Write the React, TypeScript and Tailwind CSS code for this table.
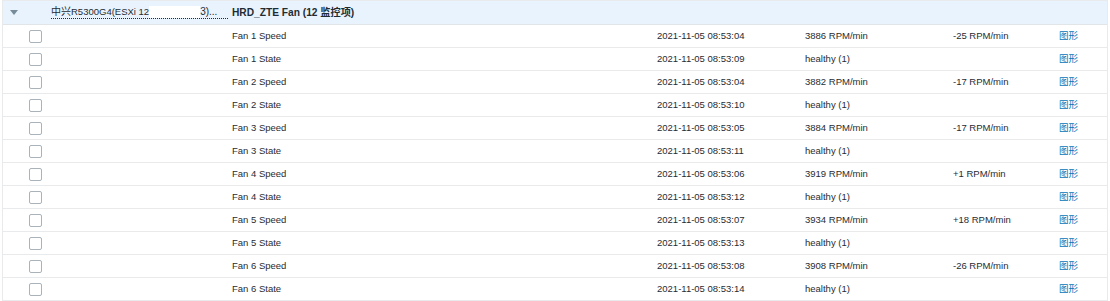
import React from "react";

const rows = [
  { name: "Fan 1 Speed", time: "2021-11-05 08:53:04", value: "3886 RPM/min", change: "-25 RPM/min" },
  { name: "Fan 1 State", time: "2021-11-05 08:53:09", value: "healthy (1)", change: "" },
  { name: "Fan 2 Speed", time: "2021-11-05 08:53:04", value: "3882 RPM/min", change: "-17 RPM/min" },
  { name: "Fan 2 State", time: "2021-11-05 08:53:10", value: "healthy (1)", change: "" },
  { name: "Fan 3 Speed", time: "2021-11-05 08:53:05", value: "3884 RPM/min", change: "-17 RPM/min" },
  { name: "Fan 3 State", time: "2021-11-05 08:53:11", value: "healthy (1)", change: "" },
  { name: "Fan 4 Speed", time: "2021-11-05 08:53:06", value: "3919 RPM/min", change: "+1 RPM/min" },
  { name: "Fan 4 State", time: "2021-11-05 08:53:12", value: "healthy (1)", change: "" },
  { name: "Fan 5 Speed", time: "2021-11-05 08:53:07", value: "3934 RPM/min", change: "+18 RPM/min" },
  { name: "Fan 5 State", time: "2021-11-05 08:53:13", value: "healthy (1)", change: "" },
  { name: "Fan 6 Speed", time: "2021-11-05 08:53:08", value: "3908 RPM/min", change: "-26 RPM/min" },
  { name: "Fan 6 State", time: "2021-11-05 08:53:14", value: "healthy (1)", change: "" },
];

export default function App() {
  return (
    <div
      className="w-[1110px] h-[301px] bg-white overflow-hidden text-[9.5px] text-[#1f2c33]"
      style={{ fontFamily: '"Liberation Sans", Arial, "Noto Sans CJK SC", sans-serif' }}
    >
      <div className="ml-[2px] mr-[2px] border-l border-r border-t border-[#e8eaec]">
        {/* group header */}
        <div className="flex items-center h-[24px] bg-[#e8f3fd] border-b border-[#e1e5e8]">
          <div className="w-[48px] flex items-center pl-[7px]">
            <svg width="8" height="5" viewBox="0 0 8 5">
              <path d="M0 0 L8 0 L4 5 Z" fill="#768d99" />
            </svg>
          </div>
          <div className="w-[181px] flex items-center">
            <span className="w-[177px] border-b border-dotted border-[#1f2c33] leading-[12px] flex items-center whitespace-nowrap">
              <span className="text-[10px]">中兴</span>
              <span>R5300G4(ESXi 12</span>
              <span className="inline-block w-[51px] h-[12px] bg-white" />
              <span className="text-[10px]">3)...</span>
            </span>
          </div>
          <div className="font-bold whitespace-nowrap text-[10.2px]">HRD_ZTE Fan (12 监控项)</div>
        </div>
        {rows.map((r, i) => (
          <div key={i} className="flex items-center h-[23px] border-b border-[#e8eaec]">
            <div className="w-[26px]" />
            <div className="w-[203px] flex items-center">
              <span className="inline-block w-[13px] h-[13px] border border-[#a9b3b9] rounded-[2px] bg-white" />
            </div>
            <div className="w-[425px] whitespace-nowrap">{r.name}</div>
            <div className="w-[148px] whitespace-nowrap">{r.time}</div>
            <div className="w-[148px] whitespace-nowrap">{r.value}</div>
            <div className="w-[106px] whitespace-nowrap">{r.change}</div>
            <div className="text-[#0275b8] whitespace-nowrap">图形</div>
          </div>
        ))}
      </div>
    </div>
  );
}
